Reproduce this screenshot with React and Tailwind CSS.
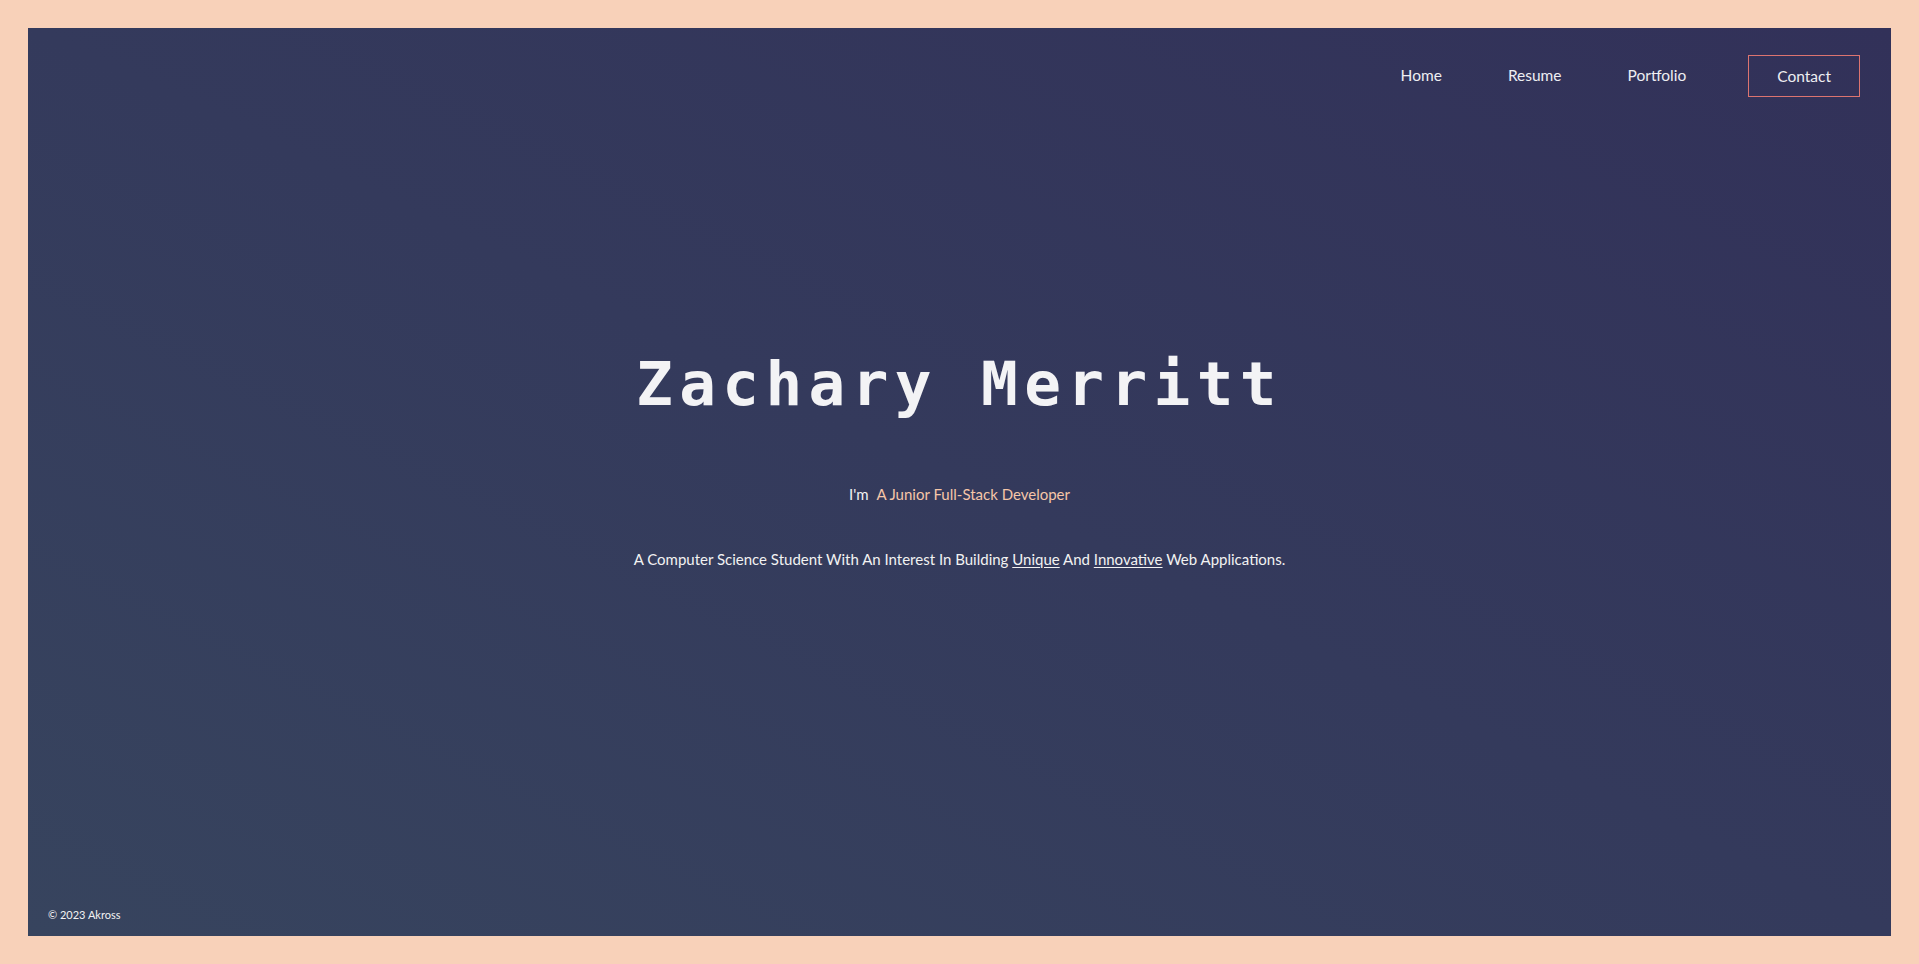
import React from "react";

const navLinks = ["Home", "Resume", "Portfolio"];

const App = () => {
  return (
    <div className="h-screen w-full bg-[#f8d1b9] p-7 font-['Lato',sans-serif]">
      <div className="flex h-full flex-col bg-linear-to-tr from-[#37445e] via-[#343a5c] to-[#323159]">
        {/* nav */}
        <nav className="mt-[27px] mr-[31px] flex h-[42px] items-center justify-end">
          <ul className="flex items-center gap-[66px] text-[15.5px] text-[#eeeef2]">
            {navLinks.map((link) => (
              <li key={link}>
                <a href="#" className="hover:text-[#f6c6a8]">
                  {link}
                </a>
              </li>
            ))}
          </ul>
          <a
            href="#"
            className="ml-[62px] flex h-[42px] items-center border border-[#dc7470] px-[28px] pt-px text-[15.5px] text-[#eeeef2]"
          >
            Contact
          </a>
        </nav>

        {/* hero */}
        <main className="mt-[256px] flex flex-col items-center">
          <h1 className="font-['DejaVu_Sans_Mono',monospace] text-[61px] leading-none font-bold tracking-[6.4px] text-[#f3f3f5]">
            Zachary Merritt
          </h1>
          <p className="mt-[68px] text-[15px] leading-6 text-[#f2f2f2]">
            I'm <span className="ml-1 text-[#f6c6a8]">A Junior Full-Stack Developer</span>
          </p>
          <p className="mt-[41px] text-[15px] leading-6 text-[#f2f2f2]">
            A Computer Science Student With An Interest In Building{" "}
            <span className="underline underline-offset-2">Unique</span> And{" "}
            <span className="underline underline-offset-2">Innovative</span> Web Applications.
          </p>
        </main>

        {/* footer */}
        <footer className="mt-auto pb-[13px] pl-5 text-[11px] leading-4 text-[#f2f2f2]">
          © 2023 Akross
        </footer>
      </div>
    </div>
  );
};

export default App;
